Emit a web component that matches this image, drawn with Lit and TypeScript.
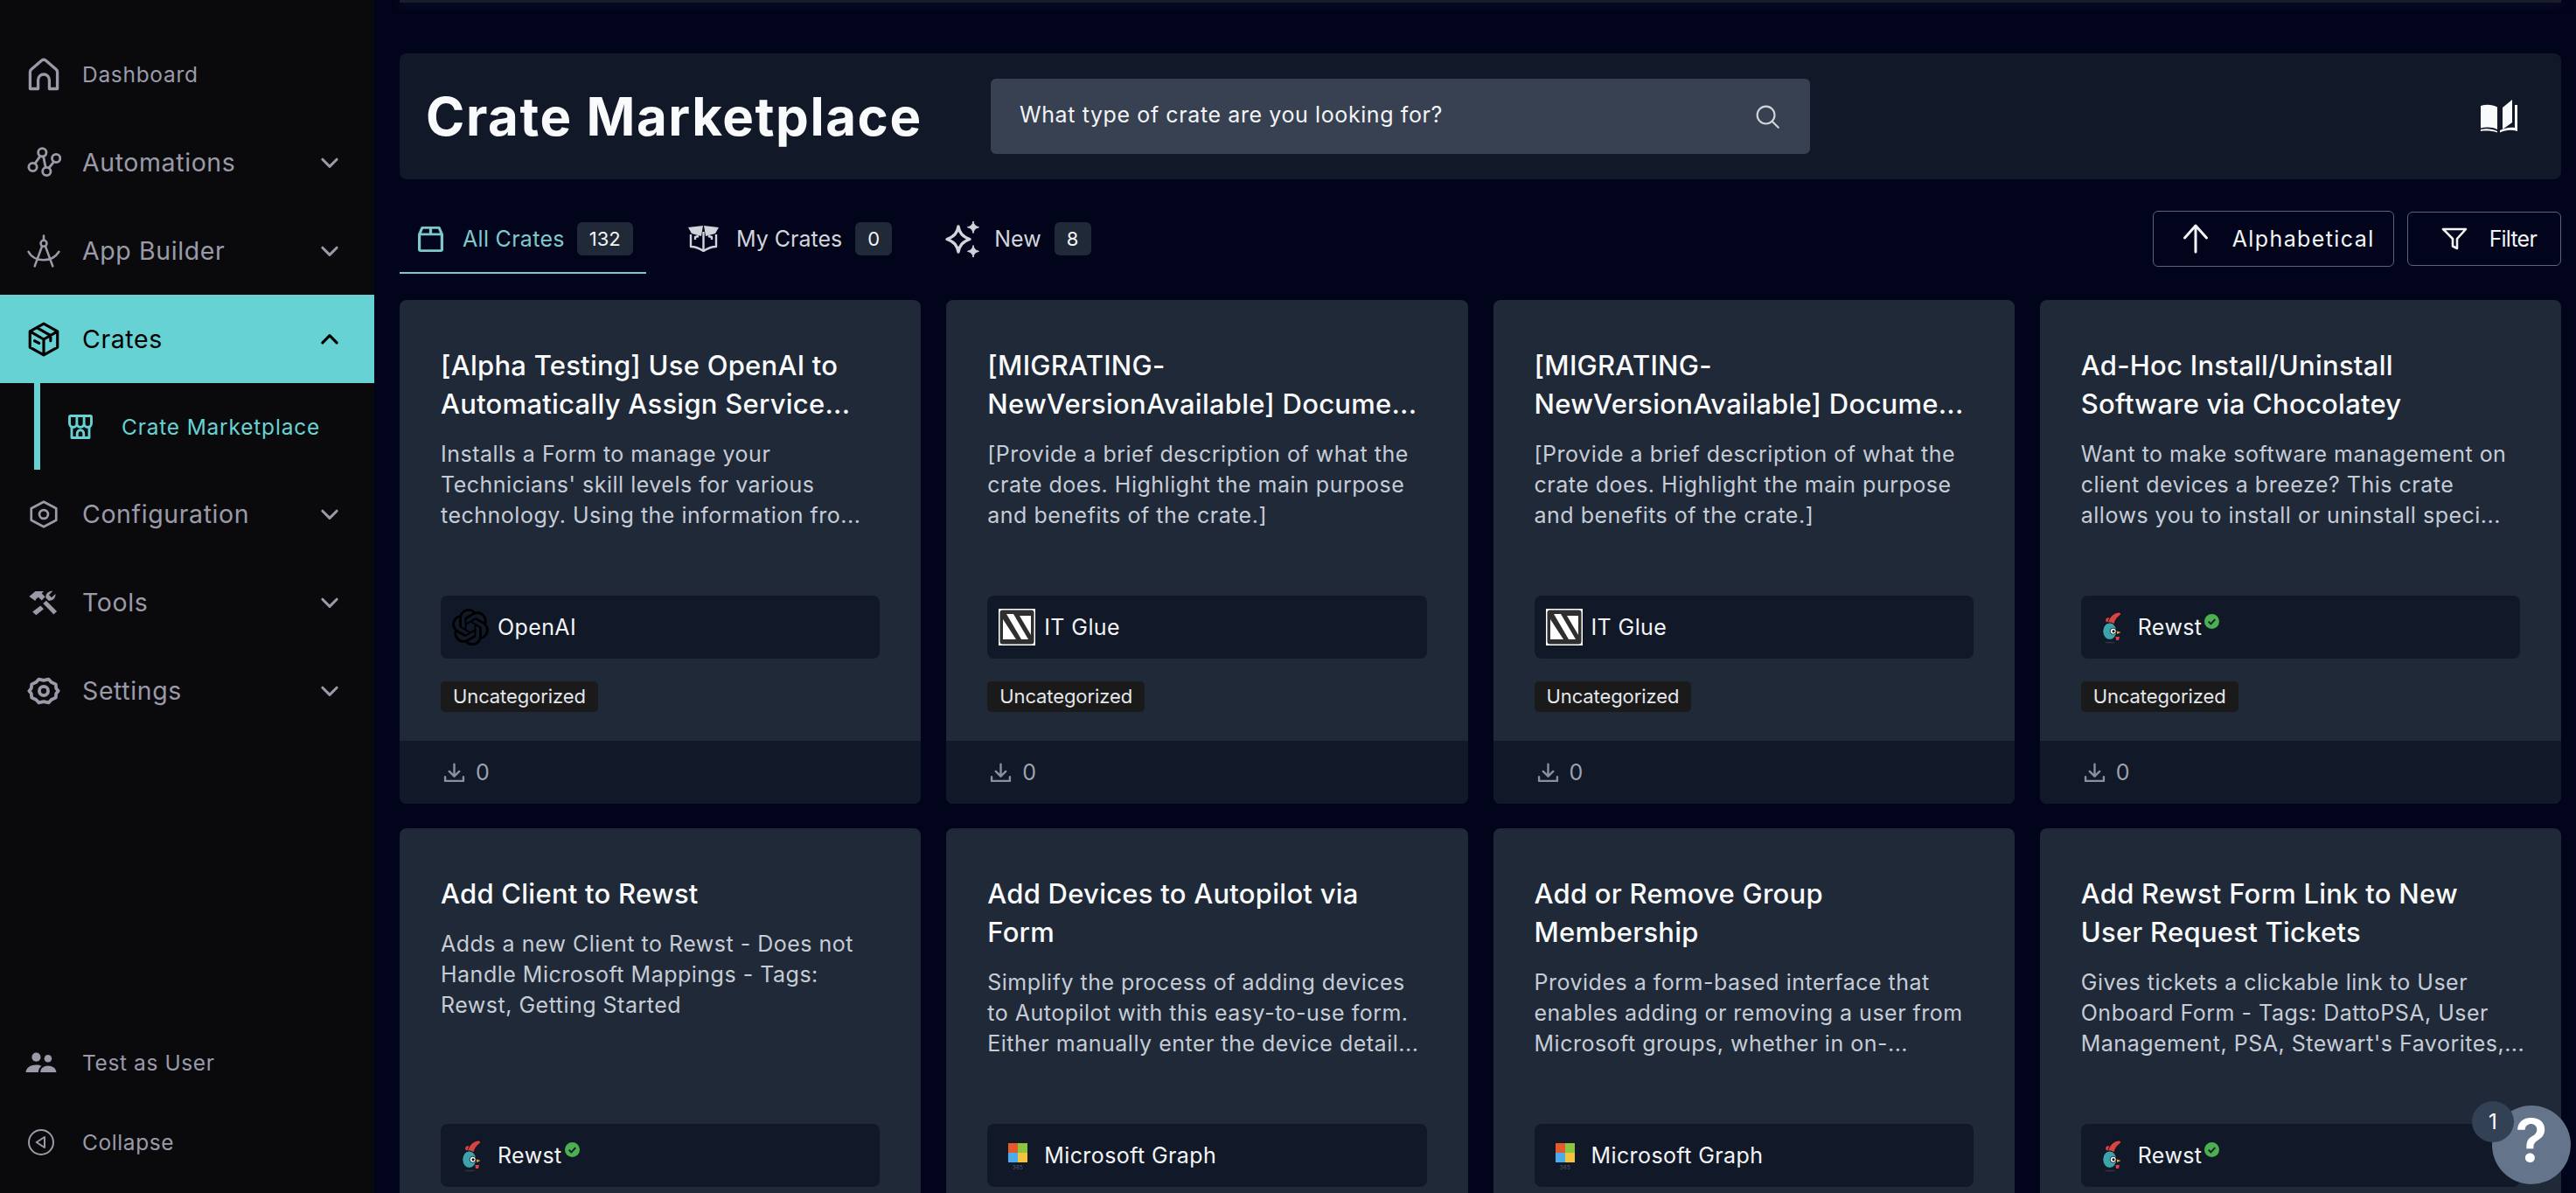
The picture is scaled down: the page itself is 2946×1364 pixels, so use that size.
import { LitElement, css, html, svg } from 'lit';
import { customElement } from 'lit/decorators.js';

const OPENAI = "M22.2819 9.8211a5.9847 5.9847 0 0 0-.5157-4.9108 6.0462 6.0462 0 0 0-6.5098-2.9A6.0651 6.0651 0 0 0 4.9807 4.1818a5.9847 5.9847 0 0 0-3.9977 2.9 6.0462 6.0462 0 0 0 .7427 7.0966 5.98 5.98 0 0 0 .511 4.9107 6.051 6.051 0 0 0 6.5146 2.9001A5.9847 5.9847 0 0 0 13.2599 24a6.0557 6.0557 0 0 0 5.7718-4.2058 5.9894 5.9894 0 0 0 3.9977-2.9001 6.0557 6.0557 0 0 0-.7475-7.0729zm-9.022 12.6081a4.4755 4.4755 0 0 1-2.8764-1.0408l.1419-.0804 4.7783-2.7582a.7948.7948 0 0 0 .3927-.6813v-6.7369l2.02 1.1686a.071.071 0 0 1 .038.052v5.5826a4.504 4.504 0 0 1-4.4945 4.4944zm-9.6607-4.1254a4.4708 4.4708 0 0 1-.5346-3.0137l.142.0852 4.783 2.7582a.7712.7712 0 0 0 .7806 0l5.8428-3.3685v2.3324a.0804.0804 0 0 1-.0332.0615L9.74 19.9502a4.4992 4.4992 0 0 1-6.1408-1.6464zM2.3408 7.8956a4.485 4.485 0 0 1 2.3655-1.9728V11.6a.7664.7664 0 0 0 .3879.6765l5.8144 3.3543-2.0201 1.1685a.0757.0757 0 0 1-.071 0l-4.8303-2.7865A4.504 4.504 0 0 1 2.3408 7.872zm16.5963 3.8558L13.1038 8.364 15.1192 7.2a.0757.0757 0 0 1 .071 0l4.8303 2.7913a4.4944 4.4944 0 0 1-.6765 8.1042v-5.6772a.79.79 0 0 0-.407-.667zm2.0107-3.0231l-.142-.0852-4.7735-2.7818a.7759.7759 0 0 0-.7854 0L9.409 9.2297V6.8974a.0662.0662 0 0 1 .0284-.0615l4.8303-2.7866a4.4992 4.4992 0 0 1 6.6802 4.66zM8.3065 12.863l-2.02-1.1638a.0804.0804 0 0 1-.038-.0567V6.0742a4.4992 4.4992 0 0 1 7.3757-3.4537l-.142.0805L8.704 5.459a.7948.7948 0 0 0-.3927.6813zm1.0976-2.3654l2.602-1.4998 2.6069 1.4998v2.9994l-2.5974 1.4997-2.6067-1.4997Z";

const line = (size: number, body: unknown, width = 2) => html`<svg width=${size} height=${size} viewBox="0 0 24 24" fill="none" stroke="currentColor" stroke-width=${width} stroke-linecap="round" stroke-linejoin="round">${body}</svg>`;
const solid = (size: number, body: unknown) => html`<svg width=${size} height=${size} viewBox="0 0 24 24" fill="currentColor">${body}</svg>`;

const icons: Record<string, () => unknown> = {
    home: () => line(44, svg`<path d="M3.500 21V10.500a2 2 0 0 1 .8-1.600l6.500-5.600a2 2 0 0 1 2.400 0l6.500 5.600a2 2 0 0 1 .8 1.600V21h-5v-5.500a3.500 3.500 0 0 0-7 0V21z"/>`, 1.800),
    flow: () => line(40, svg`<circle cx="4.500" cy="15" r="2.800"/><circle cx="11" cy="5" r="2.800"/><circle cx="14" cy="18" r="2.800"/><circle cx="20.500" cy="9" r="2.800"/><path d="M6 12.600l3.500-5M11.800 7.800l1.500 7.500M15.600 15.600l3.400-4.300"/>`, 1.700),
    compass: () => line(38, svg`<circle cx="12" cy="6.500" r="2.200"/><path d="M12 1v3.200M10.800 8.500L5.500 23M13.200 8.500L18.500 23M1 12.500c2 4 6.500 6 11 6s8.500-2 11-6"/>`, 1.600),
    box: () => line(42, svg`<path d="M12 1.800l9 5v10.400l-9 5-9-5V6.800zM3 6.800l9 5.200 9-5.200M12 12v10M7.500 4.300l9 5.200v3.500M6 13l3 1.500"/>`, 1.800),
    store: () => line(30, svg`<path d="M4 12.500V22h16v-9.500"/><path d="M3 2h18a1 1 0 0 1 1 1v6a3.300 3.300 0 0 1-6.700 0 3.300 3.300 0 0 1-6.600 0A3.350 3.350 0 0 1 2 9V3a1 1 0 0 1 1-1zM8.700 2v7M15.300 2v7M9 22v-4a3 3 0 0 1 6 0v4"/>`, 2.300),
    hex: () => line(36, svg`<path d="M12 2.500l9.500 5v9l-9.500 5-9.500-5v-9z"/><circle cx="12" cy="12" r="3.300"/>`, 1.800),
    tools: () => solid(38, svg`<path d="M13.800 10.500l7.700 7.800-2.300 2.200-7.600-7.800zM9.700 14.200l2.300 2.300-5.500 4.500-2.600-2.400zM1.500 7.500L6 3.800h6l-1.500 1.600 2.500 2.400-2.400 2.600-2.500-2.400-1.700 1.500-.5 1.200zM13.500 8.500c-.4-2.700 2.100-5.200 5-4.800l-2.700 2.800 1.900 1.900 2.800-2.700c.3 2.900-2.300 5.400-5 4.800z"/>`),
    gear: () => line(38, svg`<path d="M8.500 3.500l3.500.8 3.500-.8 2 2.200 3.200 1.500.3 3 1.500 1.800-1.500 1.800-.3 3-3.200 1.500-2 2.200-3.500-.8-3.500.8-2-2.200-3.200-1.500-.3-3L1.500 12 3 10.200l.3-3 3.200-1.500z"/><circle cx="12" cy="12" r="3.200"/>`, 2.400),
    users: () => solid(38, svg`<circle cx="8.500" cy="8" r="3.200"/><circle cx="17" cy="9" r="2.700"/><path d="M1 19c0-3.500 3.500-5.500 7.500-5.500 1.500 0 2.800.3 3.800.8-1.300 1-2.300 2.600-2.300 4.700zM11.500 19c0-3 2.500-4.800 5.500-4.800s6 1.800 6 4.800z"/>`),
    collapse: () => line(32, svg`<circle cx="12" cy="12" r="10.500"/><path d="M8 12l7-4.500v9z"/>`, 1.500),
    chev: () => line(26, svg`<path d="M4.500 8.500L12 16l7.500-7.500"/>`, 2.800),
    chevUp: () => line(26, svg`<path d="M4.500 15.500L12 8l7.500 7.500"/>`, 3),
    crate: () => html`<svg width="29" height="29" viewBox="3 1.500 18 21" preserveAspectRatio="none" fill="none" stroke="currentColor" stroke-width="2" stroke-linejoin="round"><path d="M5 8h14a1 1 0 0 1 1 1v11.500a1 1 0 0 1-1 1H5a1 1 0 0 1-1-1V9a1 1 0 0 1 1-1zM6 2.500h12L20 8H4zM12 2.500V8"/></svg>`,
    open: () => html`<svg width="35" height="30" viewBox="0 0 35 30"><path d="M0 2l17-2-2 12-11-3zM35 2L18 0l2 12 11-3z" fill="currentColor"/><path d="M3 10v14c5 0 10 2 14.500 5 4.500-3 9.500-5 14.500-5V10M17.500 7v22M12 12l-4 1v3M23 12l4 1v3" fill="none" stroke="currentColor" stroke-width="2.400" stroke-linejoin="round"/></svg>`,
    sparkle: () => html`<svg width="41" height="43" viewBox="0 0 41 43" fill="none" stroke="currentColor"><path d="M16 7c1.500 7.500 4.500 11.500 13 14.500-8.500 3-11.500 7-13 14.500-1.500-7.500-4.500-11.500-13-14.500C11.500 18.500 14.500 14.500 16 7z" stroke-width="3.400" stroke-linejoin="round"/><path d="M33 1c.7 4 2.400 5.800 6.500 6.800-4.100 1-5.800 2.800-6.500 6.800-.7-4-2.400-5.800-6.500-6.800 4.100-1 5.800-2.800 6.500-6.800zM33 28.500c.7 4 2.400 5.800 6.500 6.800-4.100 1-5.800 2.800-6.500 6.800-.7-4-2.400-5.800-6.500-6.800 4.100-1 5.800-2.800 6.500-6.800z" fill="currentColor" stroke-width="1"/></svg>`,
    search: () => line(34, svg`<circle cx="11" cy="11" r="7"/><path d="M16.200 16.200L21 21"/>`, 1.500),
    arrow: () => html`<svg width="30" height="34" viewBox="0 0 30 34" fill="none" stroke="currentColor" stroke-width="3" stroke-linecap="round" stroke-linejoin="round"><path d="M15 32V2M2.500 16L15 2l12.500 14"/></svg>`,
    filter: () => html`<svg width="30" height="26" viewBox="0 0 30 26" fill="none" stroke="currentColor" stroke-width="2.600" stroke-linejoin="round"><path d="M2 2h26L18 13v11l-5-2.500V13z"/></svg>`,
    book: () => html`<svg width="44" height="40" viewBox="0 0 44 40" fill="currentColor"><path d="M1 8c6-2 13-2 19 1.500V35c-6-3-13-3-19-1.500z"/><path d="M37 1v26l-11 8V10z"/><path d="M40 7h3v30c-6-2-13-2-20 1.500V36c5-2.500 11-4 17-3z"/><path d="M1 35c6-1.500 13-1 19 2v1.500c-6-2-13-2.500-19-1.500z"/></svg>`,
    download: () => line(25, svg`<path d="M12 2.500v13M6.500 10.500l5.500 5.500 5.500-5.500M2 16.500v4.500h20v-4.500"/>`, 2.300),
};

const logos: Record<string, () => unknown> = {
    openai: () => html`<svg width="42" height="42" viewBox="0 0 24 24" fill="#000"><path d=${OPENAI}/></svg>`,
    itglue: () => html`<svg width="42" height="42" viewBox="0 0 42 42"><rect width="42" height="42" fill="#fff"/><rect x="1.500" y="1.500" width="39" height="39" rx="3" fill="#2f2f2f"/><path d="M5 12v23h15zM9 6h8l17 29h-8zM24 8h13v22z" fill="#fff"/></svg>`,
    rewst: () => html`<svg width="30" height="40" viewBox="0 0 30 40"><ellipse cx="9" cy="37.500" rx="6" ry="1" fill="#2a3142"/><circle cx="7" cy="12" r="2.800" fill="#d64545"/><path d="M6.500 16C7.500 9 13 3.500 19 3c2.500 0 3 2.500 1.500 3.500-3 2-5.500 5-6.500 10z" fill="#d64545" stroke="#0b0b0b" stroke-width=".8"/><ellipse cx="8.700" cy="24.700" rx="8" ry="9.800" fill="#3aa3ad" stroke="#0b0b0b" stroke-width="1"/><circle cx="12.700" cy="24.700" r="3.500" fill="#fff" stroke="#0b0b0b" stroke-width=".8"/><circle cx="13" cy="24.700" r="1.500" fill="#000"/><path d="M17 24.500l4.500 1.500-4.500 2z" fill="#e8a13a"/><path d="M15.500 31H20l-1 4h-3z" fill="#d64545"/></svg>`,
    graph: () => html`<svg width="42" height="42" viewBox="0 0 42 42"><rect x="11" y="7" width="11" height="11" fill="#e35a2b"/><rect x="22" y="7" width="11" height="11" fill="#8cc540"/><rect x="11" y="18" width="11" height="11" fill="#4aaced"/><rect x="22" y="18" width="11" height="11" fill="#f5c33b"/><text x="22" y="37" text-anchor="middle" font-size="6" fill="#5a6170" font-family="Inter, sans-serif">365</text></svg>`,
};

const crates = [
    { title: "[Alpha Testing] Use OpenAI to\nAutomatically Assign Service...", desc: "Installs a Form to manage your\nTechnicians' skill levels for various\ntechnology. Using the information fro...", logo: "openai", provider: "OpenAI" },
    { title: "[MIGRATING-\nNewVersionAvailable] Docume...", desc: "[Provide a brief description of what the\ncrate does. Highlight the main purpose\nand benefits of the crate.]", logo: "itglue", provider: "IT Glue" },
    { title: "[MIGRATING-\nNewVersionAvailable] Docume...", desc: "[Provide a brief description of what the\ncrate does. Highlight the main purpose\nand benefits of the crate.]", logo: "itglue", provider: "IT Glue" },
    { title: "Ad-Hoc Install/Uninstall\nSoftware via Chocolatey", desc: "Want to make software management on\nclient devices a breeze? This crate\nallows you to install or uninstall speci...", logo: "rewst", provider: "Rewst", verified: true },
    { title: "Add Client to Rewst", desc: "Adds a new Client to Rewst - Does not\nHandle Microsoft Mappings - Tags:\nRewst, Getting Started", logo: "rewst", provider: "Rewst", verified: true },
    { title: "Add Devices to Autopilot via\nForm", desc: "Simplify the process of adding devices\nto Autopilot with this easy-to-use form.\nEither manually enter the device detail...", logo: "graph", provider: "Microsoft Graph" },
    { title: "Add or Remove Group\nMembership", desc: "Provides a form-based interface that\nenables adding or removing a user from\nMicrosoft groups, whether in on-...", logo: "graph", provider: "Microsoft Graph" },
    { title: "Add Rewst Form Link to New\nUser Request Tickets", desc: "Gives tickets a clickable link to User\nOnboard Form - Tags: DattoPSA, User\nManagement, PSA, Stewart's Favorites,...", logo: "rewst", provider: "Rewst", verified: true },
];

const navTop = [
    { label: "Dashboard", icon: "home", small: true },
    { label: "Automations", icon: "flow", chev: true },
    { label: "App Builder", icon: "compass", chev: true },
    { label: "Crates", icon: "box", chev: true, active: true },
];
const navRest = [
    { label: "Configuration", icon: "hex", chev: true },
    { label: "Tools", icon: "tools", chev: true },
    { label: "Settings", icon: "gear", chev: true },
];

@customElement('app-root')
export class AppRoot extends LitElement {

    // STYLE

    static styles = css`
        :host{
            display: block;
            height: 1364px;
            overflow: hidden;
            background: #01041a;
            font-family: "Inter", "Open Sans", sans-serif;
        }

        .page{
            display: flex;
            height: 1364px;
        }

        .sidebar{
            flex: 0 0 428px;
            height: 100%;
            display: flex;
            flex-direction: column;
            padding-top: 34px;
            box-sizing: border-box;
            background: #0a0a0d;
            color: #9a9aa8;
        }

        .item{
            display: flex;
            align-items: center;
            height: 101px;
            font-size: 28.500px;
            letter-spacing: 0.6px;
        }
        .item.small{
            font-size: 24.500px;
            letter-spacing: 0.7px;
        }
        .item.active{
            background: #67d2d4;
            color: #000;
        }
        .item .ic{
            flex: 0 0 94px;
            display: flex;
            justify-content: center;
            padding-left: 6px;
            box-sizing: border-box;
        }
        .item .chev{
            margin-left: auto;
            margin-right: 38px;
            display: flex;
        }

        .sub{
            display: flex;
            align-items: center;
            height: 99px;
            margin-left: 39px;
            border-left: 7px solid #67d2d4;
            color: #67d2d4;
            font-size: 24.500px;
            letter-spacing: 0.8px;
        }
        .sub svg{
            margin: 0 32px 0 31px;
        }

        .bottom{
            margin-top: auto;
            padding-bottom: 13px;
        }
        .bottom .item{
            height: 91px;
            font-size: 24.500px;
            letter-spacing: 0.6px;
        }
        .bottom .item .ic{
            padding-left: 0;
        }

        .main{
            flex: 1;
            min-width: 0;
            padding: 0 17px 0 29px;
        }

        .topbar{
            height: 3px;
            background: #1a1e2a;
            box-shadow: 0 3px 8px rgb(40 44 60 / 0.6);
        }

        .header{
            display: flex;
            align-items: center;
            height: 144px;
            margin-top: 58px;
            padding: 0 49px 0 30px;
            box-sizing: border-box;
            background: #111827;
            border-radius: 8px;
        }
        .header h1{
            width: 646px;
            margin: 0;
            color: #f9fafb;
            font-size: 60px;
            font-weight: 700;
            letter-spacing: 1.550px;
            white-space: nowrap;
        }
        .search{
            display: flex;
            align-items: center;
            justify-content: space-between;
            width: 937px;
            height: 86px;
            padding: 0 32px 0 33px;
            box-sizing: border-box;
            background: #374151;
            border-radius: 6px;
            color: #f3f4f6;
            font-size: 25px;
            letter-spacing: 0.6px;
        }
        .search span{
            margin-top: -4px;
        }
        .search svg{
            color: #d1d5db;
        }
        .book{
            display: flex;
            margin-left: auto;
            color: #f9fafb;
        }

        .tabs{
            display: flex;
            height: 72px;
            margin-top: 36px;
        }
        .tab{
            display: flex;
            align-items: center;
            height: 100%;
            padding-bottom: 8px;
            box-sizing: border-box;
            color: #d1d5db;
            font-size: 25px;
            letter-spacing: 0;
        }
        .tab.active{
            width: 282px;
            padding-left: 21px;
            padding-bottom: 6px;
            border-bottom: 2px solid #7ec8cb;
            color: #7ec8cb;
            letter-spacing: 0.3px;
        }
        .tab .label{
            margin-left: 22px;
        }
        .tab .count{
            display: flex;
            align-items: center;
            justify-content: center;
            min-width: 42px;
            height: 38px;
            margin-left: 15px;
            padding: 0 14px;
            box-sizing: border-box;
            background: #1f2937;
            border-radius: 6px;
            color: #f3f4f6;
            font-size: 22px;
            letter-spacing: 0;
        }
        .tab.active .count{
            margin-left: 14px;
        }
        .tab.mine{
            margin-left: 48px;
        }
        .tab.mine .label{
            margin-left: 20px;
        }
        .tab.fresh{
            margin-left: 60px;
        }
        .tab.fresh .label{
            margin-left: 16px;
        }

        .sort{
            display: flex;
            align-self: flex-start;
            align-items: center;
            height: 64px;
            margin-left: auto;
            padding: 0 21px 0 33px;
            box-sizing: border-box;
            border: 1.500px solid #5b6579;
            border-radius: 6px;
            color: #f3f4f6;
            font-size: 25px;
            letter-spacing: 1.400px;
        }
        .sort span{
            margin-left: 26.500px;
        }
        .filter{
            display: flex;
            align-self: flex-start;
            align-items: center;
            height: 62px;
            margin: 1px 0 0 15px;
            padding: 0 27px 0 38px;
            box-sizing: border-box;
            border: 1.500px solid #5b6579;
            border-radius: 6px;
            color: #f3f4f6;
            font-size: 25px;
            letter-spacing: -0.8px;
        }
        .filter span{
            margin-left: 25px;
        }

        .grid{
            display: grid;
            grid-template-columns: repeat(4, 1fr);
            grid-auto-rows: 576px;
            gap: 28px 29px;
            margin-top: 30px;
        }

        .card{
            display: flex;
            flex-direction: column;
            background: #1f2937;
            border-radius: 8px;
            overflow: hidden;
        }
        .body{
            flex: 1;
            display: flex;
            flex-direction: column;
            padding: 53px 47px 33px;
        }
        .title{
            color: #f9fafb;
            font-size: 31px;
            font-weight: 500;
            line-height: 44px;
            letter-spacing: 0.25px;
            white-space: pre;
        }
        .desc{
            margin-top: 18px;
            color: #c6ccd6;
            font-size: 25px;
            line-height: 35px;
            letter-spacing: 0.5px;
            white-space: pre;
        }
        .provider{
            display: flex;
            align-items: center;
            gap: 10px;
            height: 72px;
            margin-top: auto;
            padding-left: 13px;
            background: #111827;
            border-radius: 8px;
            color: #f3f4f6;
            font-size: 25px;
            letter-spacing: 0.4px;
        }
        .provider .logo{
            display: flex;
        }
        .provider .logo.rewst{
            margin: 0 1px 0 11px;
        }
        .check{
            width: 17px;
            height: 17px;
            margin: -14px 0 0 -7px;
        }
        .tag{
            align-self: flex-start;
            margin-top: 26px;
            padding: 0 14px;
            line-height: 35px;
            background: #1a1a1a;
            border-radius: 5px;
            color: #e5e7eb;
            font-size: 22px;
            letter-spacing: -0.1px;
        }
        .foot{
            display: flex;
            align-items: center;
            gap: 12px;
            flex: 0 0 72px;
            padding-left: 50px;
            background: #111827;
            color: #9ca3af;
            font-size: 25px;
        }
        .foot svg{
            color: #8a909c;
        }

        .help{
            position: absolute;
            left: 2850px;
            top: 1264px;
            width: 90px;
            height: 90px;
            padding-bottom: 12px;
            box-sizing: border-box;
            display: flex;
            align-items: center;
            justify-content: center;
            border-radius: 50%;
            background: #64748b;
            color: #fff;
            font-size: 68px;
            font-weight: 600;
        }
        .help .num{
            position: absolute;
            left: -23px;
            top: -5px;
            width: 48px;
            height: 47px;
            display: flex;
            align-items: center;
            justify-content: center;
            border-radius: 50%;
            background: #334155;
            font-size: 24px;
            font-weight: 400;
        }
    `;

    // MARKUP

    navItem(item: any) {
        return html`
            <div class="item ${item.small ? "small" : ""} ${item.active ? "active" : ""}">
                <span class="ic">${icons[item.icon]()}</span>
                ${item.label}
                ${item.chev ? html`<span class="chev">${item.active ? icons.chevUp() : icons.chev()}</span>` : ""}
            </div>
        `;
    }

    card(crate: any) {
        return html`
            <article class="card">
                <div class="body">
                    <div class="title">${crate.title}</div>
                    <div class="desc">${crate.desc}</div>
                    <div class="provider">
                        <span class="logo ${crate.logo}">${logos[crate.logo]()}</span>
                        ${crate.provider}
                        ${crate.verified ? html`<svg class="check" viewBox="0 0 18 18"><circle cx="9" cy="9" r="9" fill="#4caf50"/><path d="M5 9.200l2.800 2.800L13 6.500" fill="none" stroke="#10182a" stroke-width="2"/></svg>` : ""}
                    </div>
                    <span class="tag">Uncategorized</span>
                </div>
                <footer class="foot">${icons.download()} 0</footer>
            </article>
        `;
    }

    render() {
        return html`
            <div class="page">
                <aside class="sidebar">
                    ${navTop.map((item) => this.navItem(item))}
                    <div class="sub">${icons.store()} Crate Marketplace</div>
                    ${navRest.map((item) => this.navItem(item))}
                    <div class="bottom">
                        ${this.navItem({ label: "Test as User", icon: "users" })}
                        ${this.navItem({ label: "Collapse", icon: "collapse" })}
                    </div>
                </aside>

                <main class="main">
                    <div class="topbar"></div>
                    <header class="header">
                        <h1>Crate Marketplace</h1>
                        <div class="search"><span>What type of crate are you looking for?</span> ${icons.search()}</div>
                        <span class="book">${icons.book()}</span>
                    </header>

                    <nav class="tabs">
                        <div class="tab active">${icons.crate()}<span class="label">All Crates</span><span class="count">132</span></div>
                        <div class="tab mine">${icons.open()}<span class="label">My Crates</span><span class="count">0</span></div>
                        <div class="tab fresh">${icons.sparkle()}<span class="label">New</span><span class="count">8</span></div>
                        <div class="sort">${icons.arrow()}<span>Alphabetical</span></div>
                        <div class="filter">${icons.filter()}<span>Filter</span></div>
                    </nav>

                    <section class="grid">
                        ${crates.map((crate) => this.card(crate))}
                    </section>
                </main>
            </div>

            <div class="help">?<span class="num">1</span></div>
        `;
    }
}
